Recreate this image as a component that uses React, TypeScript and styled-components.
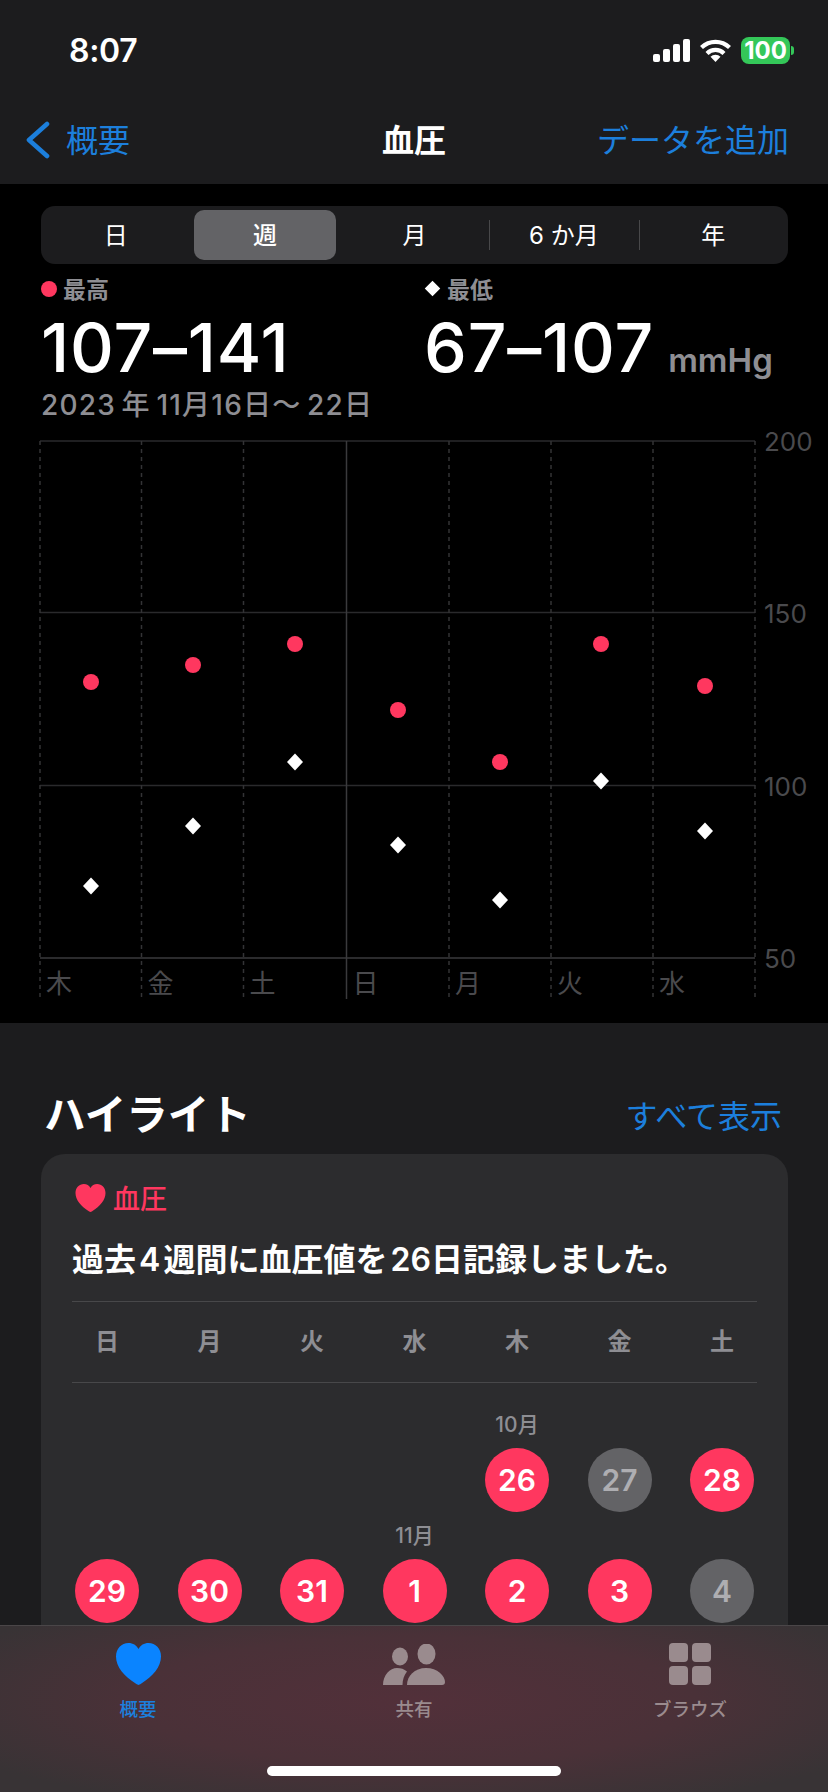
import styled, { createGlobalStyle } from 'styled-components'

const colors = {
  nav: '#1c1c1e',
  card: '#2c2c2e',
  blue: '#1c7fdc',
  pink: '#ff375f',
  grey: '#8e8e93',
  chartLine: '#2a2a2c',
  chartText: '#4a4a4d',
}

const GlobalStyle = createGlobalStyle`
  html, body {
    margin: 0;
    padding: 0;
    background: #000;
  }
  body {
    font-family: Inter, "Noto Sans CJK JP", sans-serif;
    color: #fff;
  }
`

const segments = ['日', '週', '月', '6 か月', '年']
const weekDays = ['日', '月', '火', '水', '木', '金', '土']
const chartDays = ['木', '金', '土', '日', '月', '火', '水']
const gridX = [40, 141.5, 243.5, 346.5, 449, 551, 653, 755]
const gridY = [441, 612.5, 785.5, 958]
const axisLabels = ['200', '150', '100', '50']
const points = [
  { x: 91, high: 682, low: 886 },
  { x: 193, high: 665, low: 826 },
  { x: 295, high: 644, low: 762 },
  { x: 398, high: 710, low: 845 },
  { x: 500, high: 762, low: 900 },
  { x: 601, high: 644, low: 781 },
  { x: 705, high: 686, low: 831 },
]

interface Day {
  value: number
  missed?: boolean
}

const weeks: { month: string; monthIndex: number; days: (Day | null)[] }[] = [
  {
    month: '10月',
    monthIndex: 4,
    days: [null, null, null, null, { value: 26 }, { value: 27, missed: true }, { value: 28 }],
  },
  {
    month: '11月',
    monthIndex: 3,
    days: [
      { value: 29 },
      { value: 30 },
      { value: 31 },
      { value: 1 },
      { value: 2 },
      { value: 3 },
      { value: 4, missed: true },
    ],
  },
]

const HeartIcon = ({ width, height, color }: { width: number; height: number; color: string }) => (
  <svg width={width} height={height} viewBox="0 0 45 42" fill={color}>
    <path d="M22.5 42C22 42 21 41.5 20 40.8C8 33 0 24 0 13.5C0 5.5 5.5 0 12.5 0C17 0 20.5 2.3 22.5 6C24.5 2.3 28 0 32.5 0C39.5 0 45 5.5 45 13.5C45 24 37 33 25 40.8C24 41.5 23 42 22.5 42Z" />
  </svg>
)

const App = () => {
  return (
    <>
      <GlobalStyle />
      <Screen>
        <TopBar>
          <StatusBar>
            <Time>8:07</Time>
            <StatusIcons>
              <svg width="37" height="23" viewBox="0 0 37 23" fill="#fff">
                <rect x="0" y="15" width="7" height="8" rx="2" />
                <rect x="10" y="10" width="7" height="13" rx="2" />
                <rect x="20" y="5" width="7" height="18" rx="2" />
                <rect x="30" y="0" width="7" height="23" rx="2" />
              </svg>
              <svg width="31" height="24" viewBox="0 0 31 24" fill="none" stroke="#fff" strokeWidth="4.2">
                <path d="M1.5 9.5A20 20 0 0 1 29.5 9.5" />
                <path d="M7 15.5A12 12 0 0 1 24 15.5" />
                <path d="M15.5 24L10.5 18.8A7 7 0 0 1 20.5 18.8Z" fill="#fff" stroke="none" />
              </svg>
              <Battery>
                <BatteryBody>100</BatteryBody>
                <BatteryNub />
              </Battery>
            </StatusIcons>
          </StatusBar>
          <NavBar>
            <BackLink>
              <svg width="24" height="38" viewBox="0 0 24 38" fill="none" stroke={colors.blue} strokeWidth="4.6" strokeLinecap="round" strokeLinejoin="round">
                <path d="M21 3L3 19L21 35" />
              </svg>
              <BackText>概要</BackText>
            </BackLink>
            <NavTitle>血圧</NavTitle>
            <NavAction>データを追加</NavAction>
          </NavBar>
        </TopBar>

        <Scroller>
          <ChartSection>
            <Summary>
              <SegmentBar>
                {segments.map((label, index) => (
                  <Segment key={label} $divider={index === 3 || index === 4}>
                    <SegmentLabel $selected={index === 1}>{label}</SegmentLabel>
                  </Segment>
                ))}
              </SegmentBar>
              <Stats>
                <Stat>
                  <Legend>
                    <LegendDot />
                    <LegendText>最高</LegendText>
                  </Legend>
                  <StatValue>107–141</StatValue>
                </Stat>
                <Stat>
                  <Legend>
                    <LegendDiamond />
                    <LegendText>最低</LegendText>
                  </Legend>
                  <StatValue>
                    67–107<Unit>mmHg</Unit>
                  </StatValue>
                </Stat>
              </Stats>
              <DateRange>2023 年 11月16日〜 22日</DateRange>
            </Summary>

            <Chart viewBox="0 424 828 599" width="828" height="599">
              {gridY.map((y) => (
                <line key={y} x1="40" x2="755" y1={y} y2={y} stroke={y === 958 ? '#3a3a3c' : colors.chartLine} strokeWidth="1.5" />
              ))}
              {gridX.map((x, index) => (
                <line
                  key={x}
                  x1={x}
                  x2={x}
                  y1="441"
                  y2="999"
                  stroke={index === 3 ? '#3a3a3c' : '#333335'}
                  strokeWidth="1.5"
                  strokeDasharray={index === 3 ? undefined : '4 4'}
                />
              ))}
              {axisLabels.map((label, index) => (
                <AxisText key={label} x="764" y={gridY[index] + 10}>
                  {label}
                </AxisText>
              ))}
              {chartDays.map((label, index) => (
                <AxisText key={label} x={gridX[index] + 6} y="993">
                  {label}
                </AxisText>
              ))}
              {points.map((point) => (
                <g key={point.x}>
                  <circle cx={point.x} cy={point.high} r="8" fill={colors.pink} />
                  <path
                    d={`M${point.x} ${point.low - 8.5}L${point.x + 8} ${point.low}L${point.x} ${point.low + 8.5}L${point.x - 8} ${point.low}Z`}
                    fill="#fff"
                  />
                </g>
              ))}
            </Chart>
          </ChartSection>

          <Highlights>
            <HighlightsHeader>
              <HighlightsTitle>ハイライト</HighlightsTitle>
              <ShowAll>すべて表示</ShowAll>
            </HighlightsHeader>
            <Card>
              <CardTitle>
                <HeartIcon width={31} height={28} color={colors.pink} />
                <CardTitleText>血圧</CardTitleText>
              </CardTitle>
              <Headline>過去 4 週間に血圧値を 26日記録しました。</Headline>
              <WeekHeader>
                {weekDays.map((day) => (
                  <WeekDay key={day}>{day}</WeekDay>
                ))}
              </WeekHeader>
              <Calendar>
                {weeks.map((week) => (
                  <Week key={week.month}>
                    {week.days.map((_, index) => (
                      <MonthCell key={index}>{index === week.monthIndex ? week.month : ''}</MonthCell>
                    ))}
                    {week.days.map((day, index) =>
                      day ? (
                        <DayCircle key={day.value} $missed={day.missed}>
                          {day.value}
                        </DayCircle>
                      ) : (
                        <span key={index} />
                      ),
                    )}
                  </Week>
                ))}
              </Calendar>
            </Card>
          </Highlights>
        </Scroller>

        <TabBar>
          <Tab $active>
            <TabIcon>
              <HeartIcon width={45} height={42} color="#0a84ff" />
            </TabIcon>
            概要
          </Tab>
          <Tab>
            <TabIcon>
              <svg width="62" height="41" viewBox="0 0 62 41" fill="#9a8b8e">
                <ellipse cx="17" cy="12.5" rx="8" ry="9" />
                <ellipse cx="43.5" cy="10" rx="9" ry="10.5" />
                <path d="M0 41C0 31 7 24 14 24C18 24 21 25 24 27.5C21 31 19.5 36 19.5 41Z" />
                <path d="M24 41C24 32 31.500 24 43 24C54.500 24 62 32 62 38C62 40 61 41 59 41Z" />
              </svg>
            </TabIcon>
            共有
          </Tab>
          <Tab>
            <TabIcon>
              <BrowseGrid>
                <BrowseTile />
                <BrowseTile />
                <BrowseTile />
                <BrowseTile />
              </BrowseGrid>
            </TabIcon>
            ブラウズ
          </Tab>
          <HomeIndicator />
        </TabBar>
      </Screen>
    </>
  )
}

export default App

const Screen = styled.div`
  display: flex;
  flex-direction: column;
  width: 828px;
  height: 1792px;
  overflow: hidden;
  background: #000;
`
const TopBar = styled.header`
  flex: none;
  height: 184px;
  background: ${colors.nav};
`
const StatusBar = styled.div`
  display: flex;
  justify-content: space-between;
  align-items: center;
  height: 100px;
  padding: 0 34px 0 69px;
`
const Time = styled.span`
  font-size: 32px;
  font-weight: 600;
  letter-spacing: -0.3px;
`
const StatusIcons = styled.div`
  display: flex;
  align-items: center;
  gap: 10px;
`
const Battery = styled.div`
  display: flex;
  align-items: center;
  gap: 1px;
`
const BatteryBody = styled.div`
  display: flex;
  justify-content: center;
  align-items: center;
  width: 49px;
  height: 27px;
  border-radius: 8px;
  background: #34c759;
  font-size: 24px;
  font-weight: 700;
`
const BatteryNub = styled.div`
  width: 3px;
  height: 9px;
  border-radius: 0 3px 3px 0;
  background: #34c759;
`
const NavBar = styled.nav`
  position: relative;
  display: flex;
  justify-content: space-between;
  align-items: center;
  height: 80px;
  padding: 0 39px 0 26px;
`
const BackLink = styled.div`
  display: flex;
  align-items: center;
  gap: 16px;
  color: ${colors.blue};
  font-size: 32px;
`
const BackText = styled.span`
  padding-bottom: 4px;
`
const NavTitle = styled.div`
  position: absolute;
  left: 0;
  right: 0;
  padding-bottom: 4px;
  text-align: center;
  font-size: 32px;
  font-weight: 600;
`
const NavAction = styled.div`
  padding-bottom: 4px;
  color: ${colors.blue};
  font-size: 32px;
`
const Scroller = styled.main`
  flex: 1;
  min-height: 0;
  overflow: hidden;
`
const ChartSection = styled.section`
  background: #000;
`
const Summary = styled.div`
  height: 240px;
  padding: 22px 40px 0 41px;
  box-sizing: border-box;
`
const SegmentBar = styled.div`
  display: grid;
  grid-template-columns: repeat(5, 1fr);
  height: 58px;
  border-radius: 14px;
  background: ${colors.nav};
`
const Segment = styled.div<{ $divider?: boolean }>`
  position: relative;
  display: flex;
  padding: 4px;

  &::before {
    content: '';
    display: ${({ $divider }) => ($divider ? 'block' : 'none')};
    position: absolute;
    left: 0;
    top: 14px;
    bottom: 14px;
    width: 1px;
    background: #48484a;
  }
`
const SegmentLabel = styled.div<{ $selected?: boolean }>`
  flex: 1;
  display: flex;
  justify-content: center;
  align-items: center;
  padding-bottom: 4px;
  border-radius: 10px;
  background: ${({ $selected }) => ($selected ? '#636366' : 'transparent')};
  font-size: 24px;
  font-weight: ${({ $selected }) => ($selected ? 500 : 400)};
`
const Stats = styled.div`
  display: grid;
  grid-template-columns: 383px 1fr;
  padding-top: 9px;
`
const Stat = styled.div`
  display: flex;
  flex-direction: column;
`
const Legend = styled.div`
  display: flex;
  align-items: center;
  gap: 6px;
  height: 32px;
  color: ${colors.grey};
  font-size: 23px;
  font-weight: 600;
`
const LegendText = styled.span`
  padding-bottom: 3px;
`
const LegendDot = styled.span`
  width: 16px;
  height: 16px;
  border-radius: 50%;
  background: ${colors.pink};
`
const LegendDiamond = styled.span`
  width: 11px;
  height: 11px;
  margin: 0 3px 2px;
  background: #fff;
  transform: rotate(45deg);
`
const StatValue = styled.div`
  margin-top: 8px;
  height: 68px;
  line-height: 68px;
  font-size: 68px;
  font-weight: 500;
  letter-spacing: 0.8px;
  white-space: nowrap;
`
const Unit = styled.span`
  margin-left: 14px;
  color: ${colors.grey};
  font-size: 33px;
  font-weight: 600;
  letter-spacing: 0;
`
const DateRange = styled.div`
  margin-top: 7px;
  color: ${colors.grey};
  font-size: 28px;
  font-weight: 500;
  line-height: 34px;
  letter-spacing: 1.2px;
  white-space: nowrap;
  word-spacing: -3px;
`
const Chart = styled.svg`
  display: block;
`
const AxisText = styled.text`
  fill: ${colors.chartText};
  font-size: 26px;
`
const Highlights = styled.section`
  padding: 67px 41px 0;
  background: ${colors.nav};
`
const HighlightsHeader = styled.div`
  display: flex;
  justify-content: space-between;
  align-items: flex-end;
  height: 50px;
  margin-bottom: 14px;
`
const HighlightsTitle = styled.h2`
  margin: 0 0 0 3px;
  font-size: 41.5px;
  font-weight: 700;
  line-height: 50px;
`
const ShowAll = styled.div`
  margin-right: 5px;
  color: ${colors.blue};
  font-size: 32px;
  line-height: 46px;
`
const Card = styled.div`
  padding: 28px 31px 60px;
  margin-right: -1px;
  border-radius: 24px;
  background: ${colors.card};
`
const CardTitle = styled.div`
  display: flex;
  align-items: center;
  gap: 7px;
  height: 32px;
  padding-left: 3px;
  color: ${colors.pink};
  font-size: 27px;
  font-weight: 500;
`
const CardTitleText = styled.span`
  padding-bottom: 2px;
`
const Headline = styled.div`
  margin-top: 24px;
  font-size: 32px;
  font-weight: 600;
  line-height: 44px;
  white-space: nowrap;
  word-spacing: -5px;
`
const WeekHeader = styled.div`
  display: grid;
  grid-template-columns: repeat(7, 64px);
  justify-content: space-between;
  align-items: center;
  height: 80px;
  margin-top: 19px;
  padding: 0 3px;
  border-top: 1px solid #48484a;
  border-bottom: 1px solid #48484a;
`
const WeekDay = styled.div`
  padding-bottom: 5px;
  color: ${colors.grey};
  font-size: 24px;
  font-weight: 600;
  text-align: center;
`
const Calendar = styled.div`
  padding: 18px 3px 0;
`
const Week = styled.div`
  display: grid;
  grid-template-columns: repeat(7, 64px);
  grid-template-rows: 47px 64px;
  justify-content: space-between;
`
const MonthCell = styled.div`
  align-self: center;
  padding-bottom: 4px;
  color: ${colors.grey};
  font-size: 21px;
  font-weight: 500;
  text-align: center;
  white-space: nowrap;
`
const DayCircle = styled.div<{ $missed?: boolean }>`
  display: flex;
  justify-content: center;
  align-items: center;
  width: 64px;
  height: 64px;
  border-radius: 50%;
  background: ${({ $missed }) => ($missed ? '#636366' : colors.pink)};
  color: ${({ $missed }) => ($missed ? '#aeaeb2' : '#fff')};
  font-size: 30px;
  font-weight: 600;
`
const TabBar = styled.footer`
  position: relative;
  flex: none;
  display: grid;
  grid-template-columns: repeat(3, 276px);
  height: 167px;
  box-sizing: border-box;
  border-top: 1px solid #4a4648;
  background: radial-gradient(ellipse 62% 70% at 50% 45%, #52303a 0%, #4a3138 55%, #383335 100%);
`
const Tab = styled.div<{ $active?: boolean }>`
  display: flex;
  flex-direction: column;
  align-items: center;
  padding-top: 17px;
  color: ${({ $active }) => ($active ? colors.blue : '#9a8b8e')};
  font-size: 18.5px;
  font-weight: 500;
  line-height: 24px;
`
const TabIcon = styled.div`
  display: flex;
  justify-content: center;
  align-items: center;
  height: 42px;
  margin-bottom: 12px;
`
const BrowseGrid = styled.div`
  display: grid;
  grid-template-columns: repeat(2, 19px);
  grid-auto-rows: 19px;
  gap: 4px;
`
const BrowseTile = styled.span`
  border-radius: 4px;
  background: #9a8b8e;
`
const HomeIndicator = styled.div`
  position: absolute;
  left: 267px;
  bottom: 16px;
  width: 294px;
  height: 10px;
  border-radius: 5px;
  background: #fff;
`
